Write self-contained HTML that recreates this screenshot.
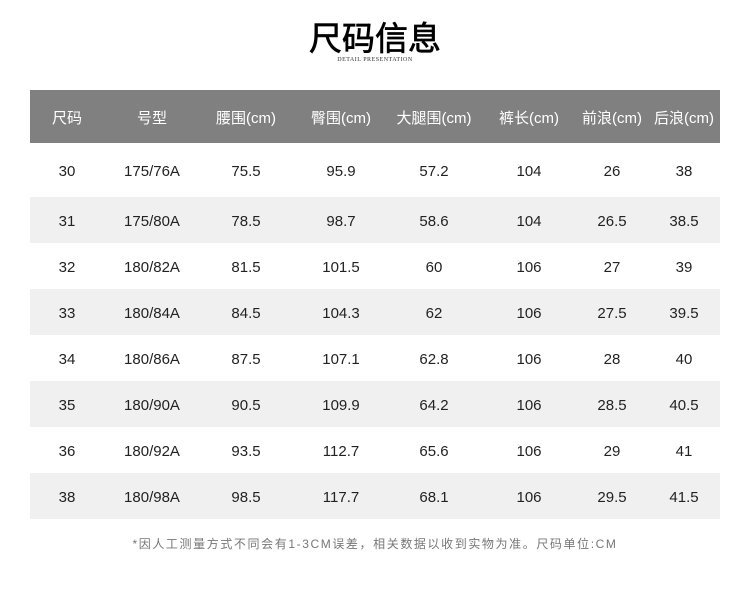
<!DOCTYPE html><html><head><meta charset="utf-8"><style>
body{margin:0;width:750px;height:596px;background:#fff;font-family:"Liberation Sans","Noto Sans CJK SC",sans-serif;position:relative;overflow:hidden}
.t{position:absolute;left:0;width:750px;text-align:center}
.row{position:absolute;left:30px;width:690px}
.c{position:absolute;transform:translateX(-50%);white-space:nowrap;font-size:15px;color:#222}
</style></head><body>
<div class="t" style="top:14px;font-size:33px;color:#000;-webkit-text-stroke:0.7px #000;font-family:'Noto Sans CJK SC',sans-serif;line-height:44px">尺码信息</div>
<div class="t" style="top:57px;font-size:6px;letter-spacing:0.5px;color:#333;font-family:'Liberation Serif',serif">DETAIL PRESENTATION</div>
<div id="tb"></div>
<div class="t" style="top:535px;font-size:12px;color:#777;letter-spacing:1.6px">*因人工测量方式不同会有1-3CM误差，相关数据以收到实物为准。尺码单位:CM</div>
<script>
const xs=[67,152,246,341,434,529,612,684];
const H=["尺码","号型","腰围(cm)","臀围(cm)","大腿围(cm)","裤长(cm)","前浪(cm)","后浪(cm)"];
const R=[["30","175/76A","75.5","95.9","57.2","104","26","38"],["31","175/80A","78.5","98.7","58.6","104","26.5","38.5"],["32","180/82A","81.5","101.5","60","106","27","39"],["33","180/84A","84.5","104.3","62","106","27.5","39.5"],["34","180/86A","87.5","107.1","62.8","106","28","40"],["35","180/90A","90.5","109.9","64.2","106","28.5","40.5"],["36","180/92A","93.5","112.7","65.6","106","29","41"],["38","180/98A","98.5","117.7","68.1","106","29.5","41.5"]];
let h='';
function row(top,ht,bg,cells,col){h+=`<div class="row" style="top:${top}px;height:${ht}px;background:${bg}">`;cells.forEach((v,i)=>{h+=`<div class="c" style="left:${xs[i]-30}px;top:${ht/2-7}px;line-height:18px;color:${col}">${v}</div>`});h+='</div>';}
row(90,53,'#808080',H,'#fff');
R.forEach((r,i)=>{const top=i==0?143:197+(i-1)*46;const ht=i==0?54:46;row(top,ht,i%2?'#f0f0f0':'#fff',r,'#222');});
document.getElementById('tb').innerHTML=h;
</script>
</body></html>
